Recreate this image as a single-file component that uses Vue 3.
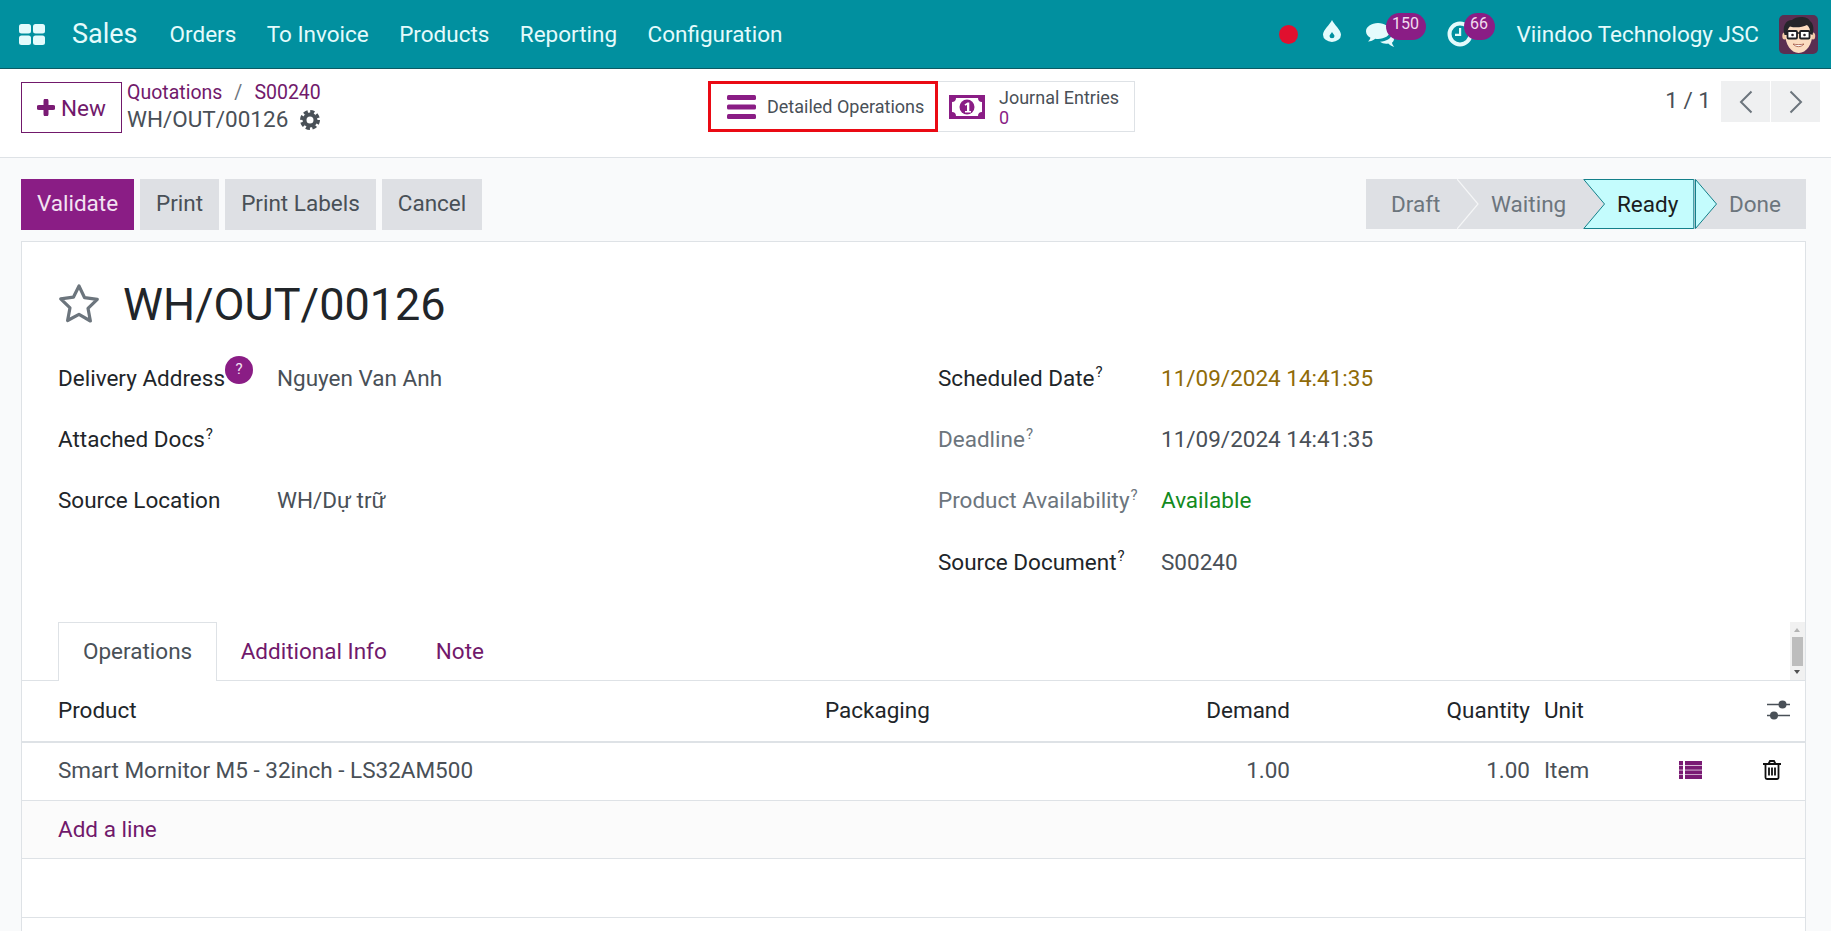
<template>
  <div class="app">
    <header class="navbar">
      <svg class="apps" viewBox="0 0 26 21" width="26" height="21">
        <rect x="0" y="0" width="12" height="9.5" rx="2.5" />
        <rect x="14" y="0" width="12" height="9.5" rx="2.5" />
        <rect x="0" y="11.5" width="12" height="9.5" rx="2.5" />
        <rect x="14" y="11.5" width="12" height="9.5" rx="2.5" />
      </svg>
      <span class="brand">Sales</span>
      <nav class="menu">
        <a v-for="item in menu" :key="item">{{ item }}</a>
      </nav>
      <div class="systray">
        <span class="rec"></span>
        <svg class="drop" viewBox="0 0 18 24" width="18" height="22" preserveAspectRatio="none">
          <path fill-rule="evenodd" d="M9 0C7 5 0 11 0 16a9 8 0 0 0 18 0C18 11 11 5 9 0zM9 13c-1 2-2.500 3-2.500 4.500a2.500 2.500 0 0 0 5 0C11.500 16 10 15 9 13z" />
        </svg>
        <span class="tray chat">
          <svg viewBox="0 0 30 25" width="30" height="25">
            <path d="M12 0C5.400 0 0 3.700 0 8.300c0 2.700 1.700 4.900 4.400 6.400-.4 1.600-1.400 2.900-2.400 3.800 2.700-.2 5.400-1.100 7.300-2.700.9.100 1.800.2 2.700.2 6.600 0 12-3.500 12-7.700C24 3.700 18.600 0 12 0z" />
            <path d="M26 11.500c-1 4-5.500 6.800-12 7.300 1.600 1.300 3.800 2 6.200 2 .7 0 1.300 0 2-.2 1.500 1.400 3.400 2.800 6 3.400-1-1.300-1.900-2.700-2.300-4.200 1.400-1 2.100-2.400 2.100-4 0-1.700-.8-3.100-2-4.300z" />
          </svg>
          <b class="badge b150">150</b>
        </span>
        <span class="tray clock">
          <svg viewBox="0 0 26 26" width="26" height="26">
            <circle cx="13" cy="13" r="10.500" fill="none" stroke="currentColor" stroke-width="4" />
            <path d="M12 7h2.200v8H8v-2.200h4z" />
          </svg>
          <b class="badge b66">66</b>
        </span>
        <span class="company">Viindoo Technology JSC</span>
        <svg class="avatar" viewBox="0 0 39 39" width="39" height="39">
          <rect width="39" height="39" rx="5" fill="#5a2f52" />
          <ellipse cx="5.500" cy="21" rx="2.200" ry="3.500" fill="#f3c9a6" />
          <ellipse cx="34" cy="21" rx="2.200" ry="3.500" fill="#f3c9a6" />
          <path d="M6 18c0-9 5-12 14-12s13.500 4 13.500 12c0 11-6 20-13.800 20S6 29 6 18z" fill="#fbdcc0" />
          <path d="M5.500 20C3 11 7 5 13 5c4-4 16-4 18 1 4 3 4 9 2.500 14l-2.500-1c.5-4-.5-7-3-9-5 2.500-12 3-17 1.500C9 13 8.500 16 8 20z" fill="#26252a" />
          <rect x="8.500" y="16" width="9.500" height="7.500" rx="1" fill="#fff" stroke="#1f1f24" stroke-width="1.800" />
          <rect x="21" y="16" width="9.500" height="7.500" rx="1" fill="#fff" stroke="#1f1f24" stroke-width="1.800" />
          <path d="M18 18h3" stroke="#1f1f24" stroke-width="1.500" />
          <circle cx="13.500" cy="20" r="1.300" fill="#2b2226" />
          <circle cx="25.500" cy="20" r="1.300" fill="#2b2226" />
          <path d="M14 29c3 3.500 8 3.500 11 0-3 .8-8 .8-11 0z" fill="#fff" stroke="#a0523f" stroke-width=".8" />
        </svg>
      </div>
    </header>

    <section class="control">
      <div class="control-left">
        <button class="btn-new">
          <svg viewBox="0 0 18 17" width="18" height="17"><path d="M9 2v13M2 8.500h14" fill="none" stroke="#7a1b74" stroke-width="5" stroke-linecap="round" /></svg>
          New
        </button>
        <div class="crumbs">
          <div class="crumb-top">
            <a>Quotations</a><span class="sep">/</span><a>S00240</a>
          </div>
          <div class="crumb-cur">
            WH/OUT/00126
            <svg class="gear" viewBox="0 0 20 20" width="20" height="20">
              <circle cx="10" cy="10" r="5.500" fill="none" stroke="#495057" stroke-width="4" />
              <circle cx="10" cy="10" r="8.500" fill="none" stroke="#495057" stroke-width="3" stroke-dasharray="4.200 2.470" />
            </svg>
          </div>
        </div>
      </div>
      <div class="stats">
        <button class="stat marked">
          <svg viewBox="0 0 29 24" width="29" height="24">
            <rect width="29" height="5" rx="1.500" />
            <rect y="9.500" width="29" height="5" rx="1.500" />
            <rect y="19" width="29" height="5" rx="1.500" />
          </svg>
          <span>Detailed Operations</span>
        </button>
        <button class="stat journal">
          <svg viewBox="0 0 36 24" width="36" height="24">
            <path fill-rule="evenodd" d="M0 0h36v24H0zM7 3c0 2.500-1.500 4-4 4v10c2.500 0 4 1.500 4 4h22c0-2.500 1.500-4 4-4V7c-2.500 0-4-1.500-4-4z" />
            <circle cx="18" cy="12" r="7.500" />
            <path d="M15.500 9.500l3-2h1.800v8.500h1.700v1.500h-6V16h2V9.800l-1.500.9z" fill="#fff" />
          </svg>
          <span class="stat-text">
            <span>Journal Entries</span>
            <span class="stat-num">0</span>
          </span>
        </button>
      </div>
      <div class="pager">
        <span>1 / 1</span>
        <div class="pager-btns">
          <button>
            <svg viewBox="0 0 14 24" width="14" height="24"><path d="M12.500 1.500L2 12l10.500 10.500" /></svg>
          </button>
          <button>
            <svg viewBox="0 0 14 24" width="14" height="24"><path d="M1.500 1.500L12 12 1.500 22.500" /></svg>
          </button>
        </div>
      </div>
    </section>

    <section class="actions">
      <div class="action-btns">
        <button class="act primary">Validate</button>
        <button class="act">Print</button>
        <button class="act">Print Labels</button>
        <button class="act">Cancel</button>
      </div>
      <div class="status">
        <div class="step draft">
          Draft
          <svg class="arrow" viewBox="0 0 22 50" width="22" height="50"><path d="M0 0l21 25L0 50" fill="none" stroke="#f5f6f7" stroke-width="1.200" /></svg>
        </div>
        <div class="step waiting">Waiting</div>
        <div class="step ready">
          <svg class="ready-in" viewBox="0 0 135 50" width="135" height="50">
            <path d="M.8.500h110v49H.8l20.700-24.500z" fill="#c4fcfd" stroke="#14808a" />
            <path d="M112.500.500l21 24.500-21 24.500z" fill="#c4fcfd" stroke="#14808a" />
          </svg>
          <span>Ready</span>
        </div>
        <div class="step done">Done</div>
      </div>
    </section>

    <section class="sheet">
      <div class="title">
        <svg viewBox="0 0 42 40" width="42" height="40">
          <path d="M21 3l5.600 11.700 12.700 1.700-9.300 8.900 2.400 12.700L21 31.300 9.600 37.500 12 24.800 2.700 15.900l12.700-1.700z" fill="none" stroke="#6c757d" stroke-width="3.200" stroke-linejoin="round" />
        </svg>
        <h1>WH/OUT/00126</h1>
      </div>
      <div class="fields">
        <div class="group">
          <div class="field">
            <label class="strong addr">Delivery Address<i class="help-dot">?</i></label>
            <span>Nguyen Van Anh</span>
          </div>
          <div class="field">
            <label class="strong">Attached Docs<sup>?</sup></label>
            <span></span>
          </div>
          <div class="field">
            <label class="strong">Source Location</label>
            <span>WH/Dự trữ</span>
          </div>
        </div>
        <div class="group right">
          <div class="field">
            <label class="strong">Scheduled Date<sup>?</sup></label>
            <span class="late">11/09/2024 14:41:35</span>
          </div>
          <div class="field">
            <label>Deadline<sup>?</sup></label>
            <span>11/09/2024 14:41:35</span>
          </div>
          <div class="field">
            <label>Product Availability<sup>?</sup></label>
            <span class="ok">Available</span>
          </div>
          <div class="field">
            <label class="strong">Source Document<sup>?</sup></label>
            <span>S00240</span>
          </div>
        </div>
      </div>

      <div class="tabs">
        <a class="tab active">Operations</a>
        <a class="tab">Additional Info</a>
        <a class="tab">Note</a>
        <div class="scroller">
          <i class="up"></i>
          <i class="thumb"></i>
          <i class="down"></i>
        </div>
      </div>

      <div class="row head">
        <div>Product</div>
        <div>Packaging</div>
        <div class="num">Demand</div>
        <div class="num">Quantity</div>
        <div class="unit">Unit</div>
        <div></div>
        <div class="icon-cell">
          <svg viewBox="0 0 23 20" width="23" height="20">
            <path d="M0 4.500h23M0 15.500h23" stroke="#495057" stroke-width="1.500" />
            <circle cx="15.500" cy="4.500" r="4" fill="#495057" />
            <circle cx="7" cy="15.500" r="4" fill="#495057" />
          </svg>
        </div>
      </div>
      <div class="row line">
        <div>Smart Mornitor M5 - 32inch - LS32AM500</div>
        <div></div>
        <div class="num">1.00</div>
        <div class="num">1.00</div>
        <div class="unit">Item</div>
        <div class="icon-cell">
          <svg viewBox="0 0 23 18" width="23" height="18" fill="#7a1b74">
            <rect width="4" height="4" /><rect x="6" width="17" height="4" />
            <rect y="4.700" width="4" height="4" /><rect x="6" y="4.700" width="17" height="4" />
            <rect y="9.400" width="4" height="4" /><rect x="6" y="9.400" width="17" height="4" />
            <rect y="14" width="4" height="4" /><rect x="6" y="14" width="17" height="4" />
          </svg>
        </div>
        <div class="icon-cell">
          <svg viewBox="0 0 18 20" width="18" height="20" fill="none" stroke="#111" stroke-width="1.800">
            <path d="M0 4h18M5.500 4l1.500-3h4l1.500 3" />
            <path d="M2.500 4v13.500a1.500 1.500 0 0 0 1.500 1.500h10a1.500 1.500 0 0 0 1.500-1.500V4" />
            <path d="M6 7.500v8M9 7.500v8M12 7.500v8" />
          </svg>
        </div>
      </div>
      <div class="row add"><a>Add a line</a></div>
      <div class="row blank"></div>
      <div class="row blank"></div>
    </section>
  </div>
</template>

<script setup>
const menu = ['Orders', 'To Invoice', 'Products', 'Reporting', 'Configuration'];
</script>

<style>
html,
body {
  margin: 0;
  background: #f9fafb;
}
</style>

<style scoped>
.app {
  height: 931px;
  overflow: hidden;
  background: #f9fafb;
  color: #495057;
  font-family: Roboto, "Noto Sans", sans-serif;
  font-size: 22.5px;
}

button {
  font: inherit;
  cursor: pointer;
}

/* top bar */
.navbar {
  display: flex;
  align-items: center;
  height: 68px;
  border-bottom: 1px solid #0c5a64;
  background: #01909f;
  color: #e4fbfc;
}

.apps {
  margin-left: 19px;
  fill: #e4fbfc;
}

.brand {
  margin-left: 27px;
  font-size: 27px;
}

.menu {
  display: flex;
  gap: 30.4px;
  margin-left: 32px;
}

.systray {
  display: flex;
  align-items: center;
  margin-left: auto;
  padding-right: 13px;
}

.rec {
  width: 19px;
  height: 19px;
  border-radius: 50%;
  background: #e0102f;
}

.drop {
  margin: -6px 0 0 25px;
  fill: #e4fbfc;
}

.tray {
  position: relative;
  display: flex;
  fill: #e4fbfc;
}

.chat {
  margin-left: 25px;
  margin-top: 3px;
}

.clock {
  margin-left: 51px;
}

.badge {
  position: absolute;
  display: block;
  height: 27px;
  border-radius: 14px;
  background: #8a1d85;
  color: #f1dcef;
  font-size: 16px;
  font-weight: 400;
  line-height: 22px;
  text-align: center;
}

.b150 {
  top: -10px;
  left: 20px;
  width: 40px;
}

.b66 {
  top: -8px;
  left: 17px;
  width: 31px;
}

.company {
  margin-left: 44px;
}

.avatar {
  margin-left: 20px;
}

/* breadcrumb, stat buttons, pager */
.control {
  display: flex;
  height: 89px;
  border-bottom: 1px solid #dee2e6;
  background: #fff;
  box-sizing: border-box;
}

.control-left {
  display: flex;
  flex: 0 0 708px;
  padding: 13px 0 0 21px;
  box-sizing: border-box;
}

.btn-new {
  display: flex;
  align-items: center;
  gap: 6px;
  width: 101px;
  height: 51px;
  padding: 0 0 0 15px;
  border: 1px solid #71196b;
  background: #fff;
  color: #71196b;
  box-sizing: border-box;
}

.crumbs {
  margin-left: 5px;
}

.crumb-top {
  margin-top: -3px;
  font-size: 19.5px;
  line-height: 27px;
}

.crumb-top a {
  color: #71196b;
}

.sep {
  margin: 0 12px;
  color: #6c757d;
}

.crumb-cur {
  display: flex;
  align-items: center;
  gap: 12px;
  line-height: 27px;
}

.stats {
  display: flex;
  height: 51px;
  margin-top: 12px;
}

.stat {
  display: flex;
  align-items: center;
  height: 100%;
  background: #fff;
  color: #495057;
  font-size: 18px;
  box-sizing: border-box;
}

.stat svg {
  flex: none;
  fill: #8a1d85;
}

.marked {
  gap: 11px;
  width: 230px;
  padding: 0 0 0 16px;
  border: 3px solid #ea0a14;
}

.journal {
  gap: 14px;
  width: 197px;
  padding: 0 0 0 11px;
  border: 1px solid #dee2e6;
  border-left: 0;
}

.stat-text {
  display: flex;
  flex-direction: column;
  align-items: flex-start;
  padding-top: 2px;
  line-height: 20px;
}

.stat-num {
  color: #8a1d85;
}

.pager {
  display: flex;
  align-items: flex-start;
  gap: 10px;
  margin-left: auto;
  padding: 12px 11px 0 0;
  line-height: 39px;
}

.pager-btns {
  display: flex;
  gap: 1px;
}

.pager-btns button {
  display: flex;
  align-items: center;
  justify-content: center;
  width: 49px;
  height: 41px;
  padding: 0;
  border: 0;
  background: #eff0f1;
}

.pager-btns svg {
  fill: none;
  stroke: #6c757d;
  stroke-width: 2;
}

/* buttons and status bar */
.actions {
  display: flex;
  justify-content: space-between;
  padding: 21px 25px 11px 21px;
}

.action-btns {
  display: flex;
  gap: 6px;
}

.act {
  height: 51px;
  padding: 0 0 4px;
  width: 79px;
  border: 0;
  background: #dee0e4;
  color: #495057;
}

.act:nth-child(3) {
  width: 151px;
}

.act:nth-child(4) {
  width: 100px;
}

.primary {
  width: 113px;
  background: #8a1d85;
  color: #f3e3f2;
}

.status {
  display: flex;
  height: 50px;
  background: #dee0e4;
  color: #6c757d;
  line-height: 50px;
}

.step {
  position: relative;
}

.draft {
  width: 91px;
  padding-left: 25px;
  box-sizing: border-box;
}

.arrow {
  position: absolute;
  top: 0;
  left: 91px;
}

.waiting {
  width: 126px;
  padding-left: 34px;
  box-sizing: border-box;
}

.ready {
  width: 133px;
  color: #1a1d20;
}

.ready-in {
  position: absolute;
  top: 0;
  left: 0;
}

.ready span {
  position: relative;
  margin-left: 34px;
}

.done {
  width: 90px;
  padding-left: 13px;
  box-sizing: border-box;
}

/* form sheet */
.sheet {
  margin: 0 25px 0 21px;
  border: 1px solid #dee2e6;
  background: #fff;
}

.title {
  display: flex;
  align-items: center;
  gap: 23px;
  height: 105px;
  padding: 19px 0 0 36px;
  box-sizing: border-box;
}

.title svg {
  flex: none;
  margin-top: -2px;
}

.title h1 {
  margin: 0;
  color: #212529;
  font-size: 45px;
  font-weight: 400;
}

.fields {
  display: flex;
}

.group {
  flex: 0 0 880px;
  padding-left: 36px;
  box-sizing: border-box;
}

.right {
  flex: 1;
  padding-left: 36px;
}

.field {
  display: flex;
  align-items: center;
  height: 61.4px;
}

.field label {
  position: relative;
  flex: 0 0 219px;
  color: #6c757d;
}

.right .field label {
  flex-basis: 223px;
}

.field label.strong {
  color: #212529;
}

sup {
  margin-left: 1px;
  font-size: 15px;
  line-height: 0;
}

.help-dot {
  position: absolute;
  top: -9px;
  left: 167px;
  width: 28px;
  height: 28px;
  border-radius: 50%;
  background: #8a1d85;
  color: #f3e3f2;
  font-size: 15px;
  font-style: normal;
  line-height: 26px;
  text-align: center;
}

.late {
  color: #8f6b08;
}

.ok {
  color: #138a1d;
}

/* notebook */
.tabs {
  position: relative;
  display: flex;
  height: 58px;
  margin-top: 29px;
  padding-left: 36px;
  border-bottom: 1px solid #dee2e6;
  box-sizing: content-box;
}

.tab {
  height: 58px;
  padding: 0 24.5px;
  color: #71196b;
  line-height: 58px;
  box-sizing: border-box;
}

.tab.active {
  height: 59px;
  padding: 0 24px;
  border: 1px solid #dee2e6;
  border-bottom: 0;
  background: #fff;
  color: #495057;
  line-height: 57px;
}

.tab.active + .tab {
  margin-left: -1px;
}

.scroller {
  position: absolute;
  top: 0;
  right: 0;
  width: 15px;
  height: 58px;
  background: #f1f1f1;
}

.scroller i {
  position: absolute;
  display: block;
}

.thumb {
  top: 15px;
  left: 2px;
  width: 11px;
  height: 29px;
  background: #bdbdbd;
}

.up,
.down {
  left: 4px;
  border-right: 3.500px solid transparent;
  border-left: 3.500px solid transparent;
}

.up {
  top: 6px;
  border-bottom: 4px solid #b3b3b3;
}

.down {
  bottom: 6px;
  border-top: 4px solid #505050;
}

.row {
  display: grid;
  grid-template-columns: 767px 233px 232px 240px 149px 84px 1fr;
  align-items: center;
  padding-left: 36px;
  border-bottom: 1px solid #dee2e6;
  box-sizing: border-box;
}

.head {
  height: 62px;
  padding-bottom: 2px;
  border-bottom-width: 2px;
  color: #212529;
}

.line {
  height: 58px;
  padding-bottom: 2px;
}

.add {
  display: flex;
  height: 58px;
  background: #fbfbfb;
}

.add a {
  color: #71196b;
}

.blank {
  height: 59px;
}

.num {
  text-align: right;
}

.unit {
  padding-left: 14px;
}

.icon-cell {
  display: flex;
}

.icon-cell svg {
  display: block;
}

.head .icon-cell {
  margin-left: 4px;
}
</style>
